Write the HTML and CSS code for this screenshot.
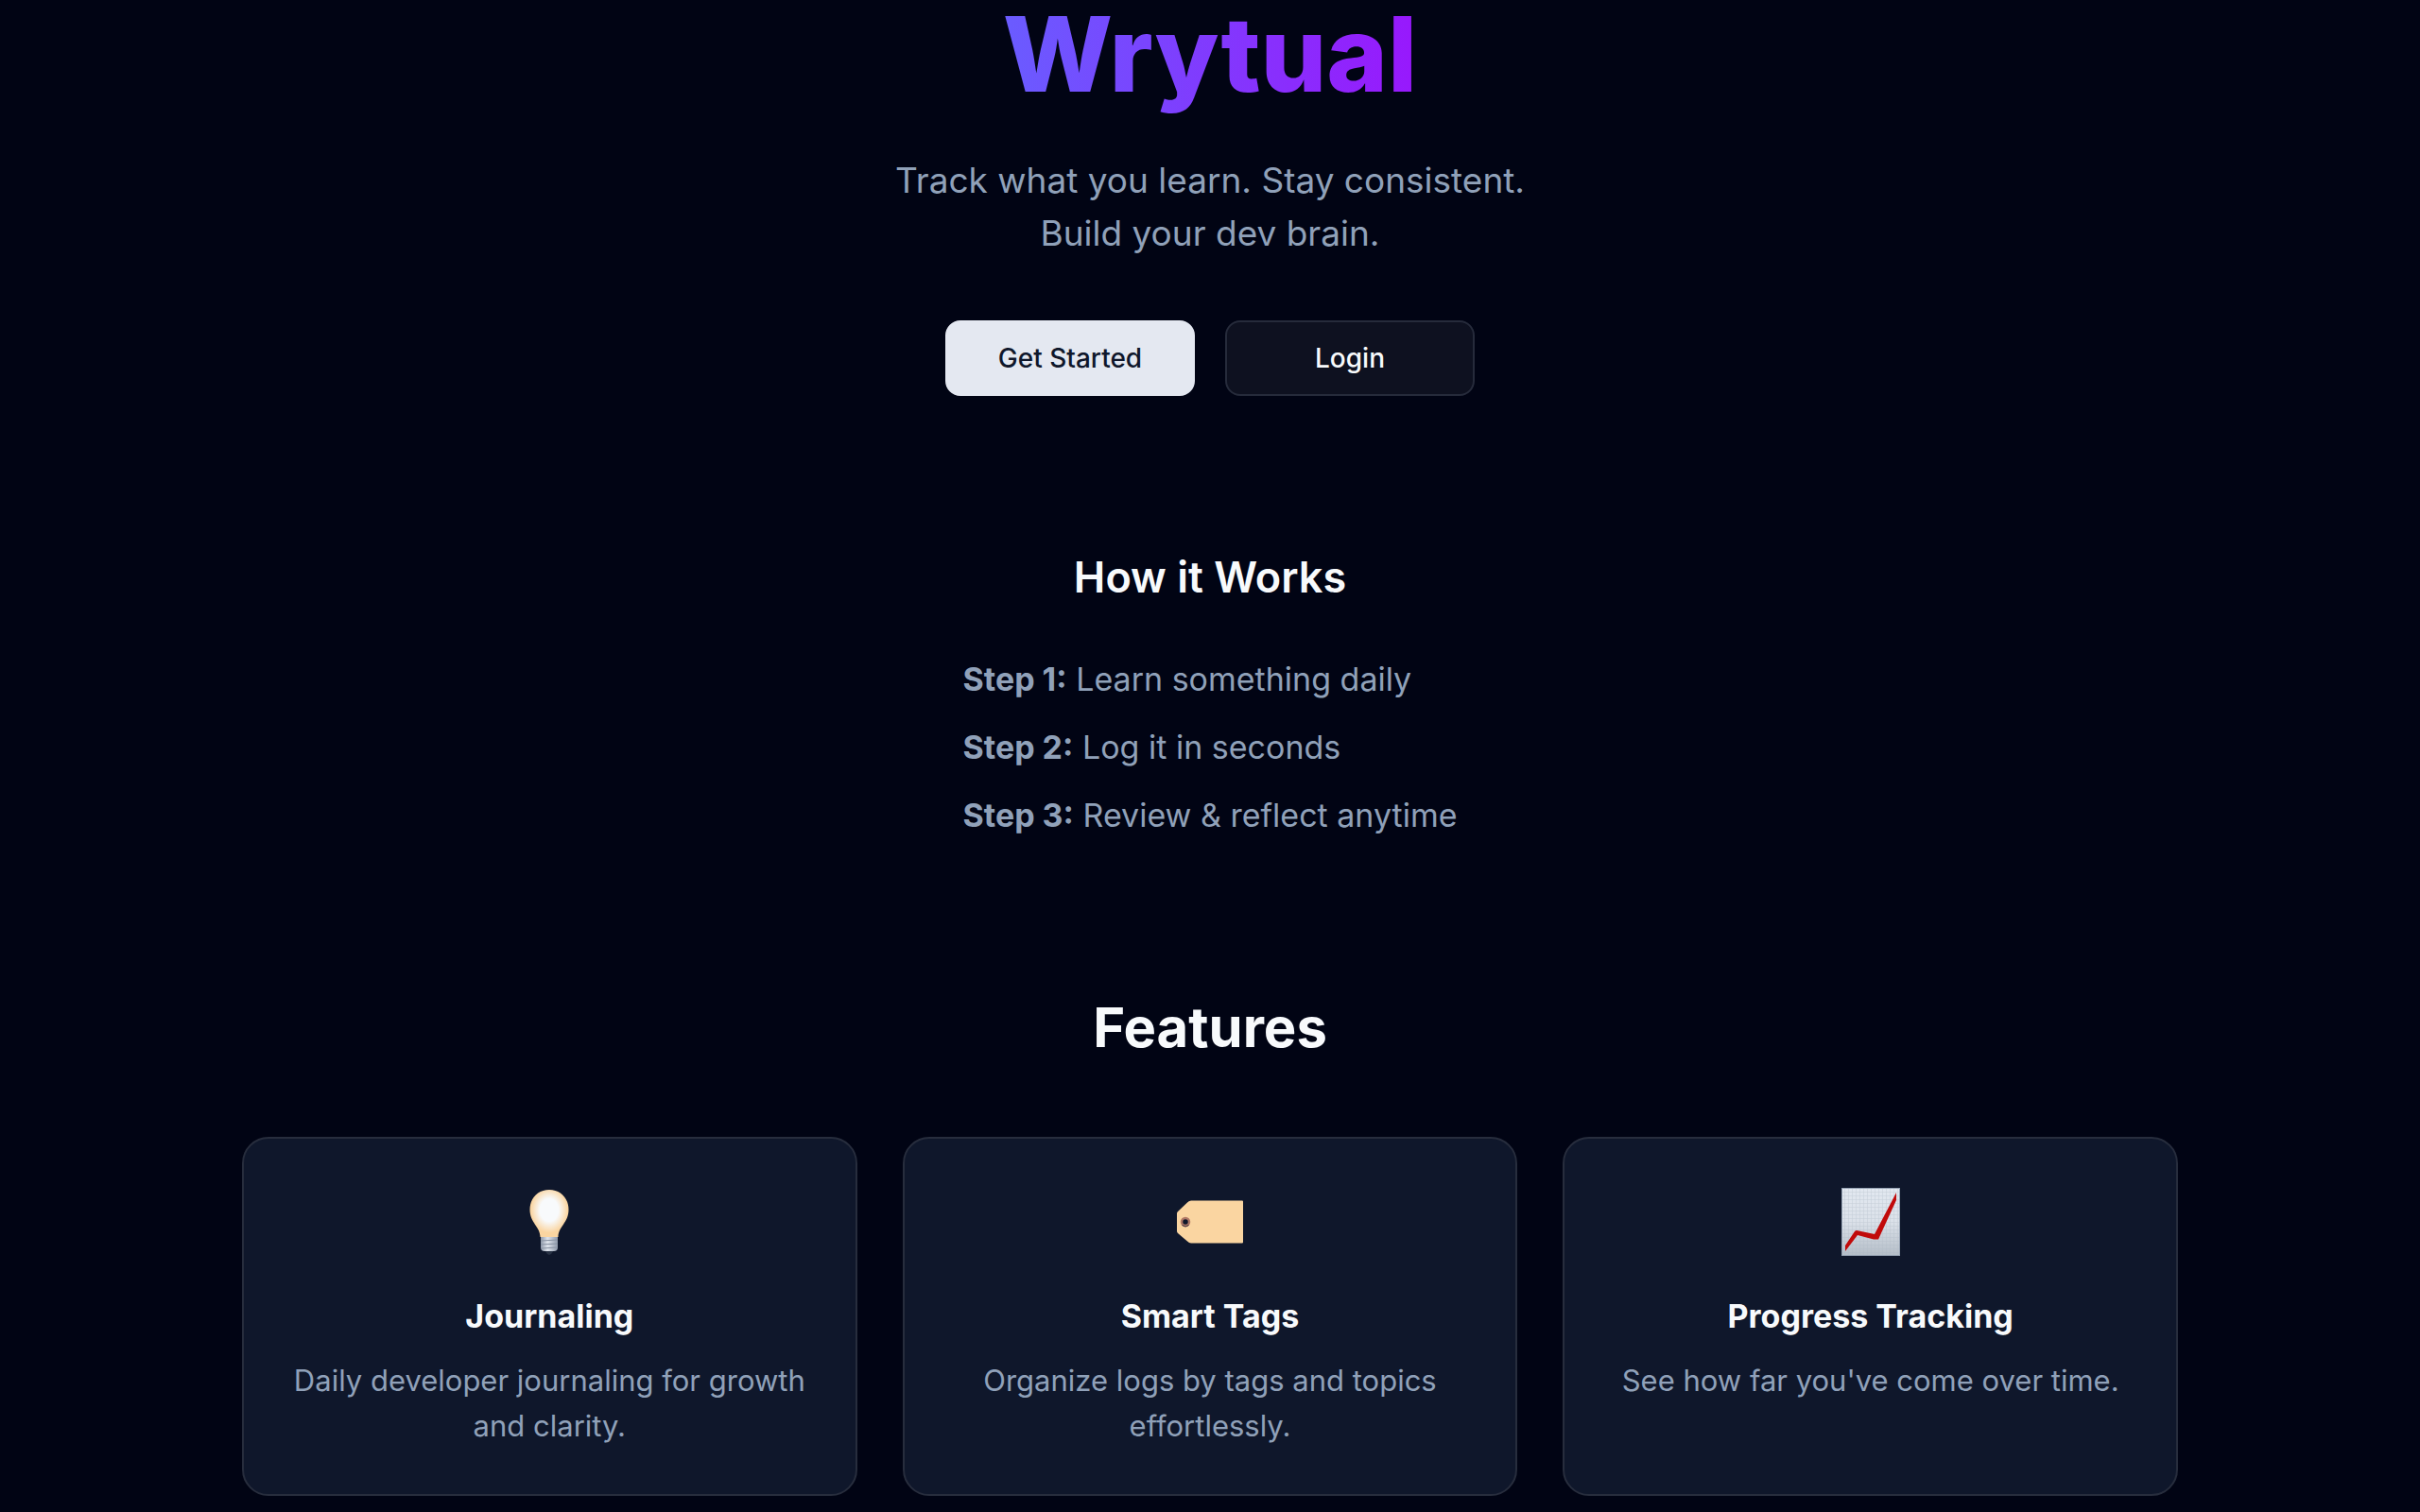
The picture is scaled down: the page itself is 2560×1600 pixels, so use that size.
FILE: index.html
```html
<!DOCTYPE html>
<html lang="en">
<head>
    <meta charset="UTF-8">
    <meta name="viewport" content="width=device-width, initial-scale=1.0">
    <title>Wrytual</title>
    <link rel="stylesheet" href="styles.css">
</head>
<body>

    <!-- Hero -->
    <header class="hero">
        <h1 class="logo">Wrytual</h1>
        <p class="tagline">Track what you learn. Stay consistent.<br>Build your dev brain.</p>
        <div class="button-group">
            <button type="button" class="btn btn-primary">Get Started</button>
            <button type="button" class="btn btn-outline">Login</button>
        </div>
    </header>

    <main>
        <!-- How it Works -->
        <section class="how">
            <h2 class="how-title">How it Works</h2>
            <ul class="steps">
                <li><strong>Step 1:</strong> Learn something daily</li>
                <li><strong>Step 2:</strong> Log it in seconds</li>
                <li><strong>Step 3:</strong> Review &amp; reflect anytime</li>
            </ul>
        </section>

        <!-- Features -->
        <section class="features">
            <h2 class="features-title">Features</h2>
            <div class="cards">
                <article class="card">
                    <svg class="card-icon" viewBox="0 0 80 80" aria-hidden="true">
                        <defs>
                            <radialGradient id="glow" cx="0.5" cy="0.43" r="0.48">
                                <stop offset="0.5" stop-color="#f8fafc"/>
                                <stop offset="1" stop-color="#fad5a1"/>
                            </radialGradient>
                            <linearGradient id="metal" x1="0" x2="1" y1="0" y2="0">
                                <stop offset="0" stop-color="#8f99aa"/>
                                <stop offset="0.4" stop-color="#dfe4ec"/>
                                <stop offset="1" stop-color="#8f99aa"/>
                            </linearGradient>
                        </defs>
                        <path d="M35 70h10l-3 4-2 1-2-1z" fill="#293345"/>
                        <path d="M31 55h18v12q0 4-4 4H35q-4 0-4-4z" fill="url(#metal)"/>
                        <path d="M31 60l18-1M31 64l18-1M32 68l16-1" stroke="#8993a3" stroke-width="1"/>
                        <path d="M40 6C28 6 19.500 15 19.500 27c0 14 11 18 11 29h19c0-11 11-15 11-29C60.500 15 52 6 40 6z" fill="url(#glow)"/>
                    </svg>
                    <h3 class="card-title">Journaling</h3>
                    <p class="card-text">Daily developer journaling for growth and clarity.</p>
                </article>
                <article class="card">
                    <svg class="card-icon" viewBox="0 0 80 80" aria-hidden="true">
                        <path d="M20 17.500h54q1 0 1 1v43q0 1-1 1H20q-2 0-4-2L6 52q-1-1-1-2V31q0-1 1-2l10-9.500q2-2 4-2z" fill="#fad5a1"/>
                        <circle cx="14" cy="40" r="4" fill="#0f172b" stroke="#af7866" stroke-width="2.500"/>
                        <path d="M10.500 43.500q3.500 3 7 0" fill="none" stroke="#3a3141" stroke-width="1"/>
                    </svg>
                    <h3 class="card-title">Smart Tags</h3>
                    <p class="card-text">Organize logs by tags and topics effortlessly.</p>
                </article>
                <article class="card">
                    <svg class="card-icon" viewBox="0 0 80 80" aria-hidden="true">
                        <defs>
                            <linearGradient id="paper" x1="0" x2="0" y1="0" y2="1">
                                <stop offset="0" stop-color="#e2e8f0"/>
                                <stop offset="0.5" stop-color="#dbe1e9"/>
                                <stop offset="1" stop-color="#b5bec8"/>
                            </linearGradient>
                            <pattern id="grid" width="4" height="4" patternUnits="userSpaceOnUse">
                                <path d="M0 0h4M0 0v4" stroke="#aab6c2" stroke-width="1"/>
                            </pattern>
                        </defs>
                        <rect x="9.500" y="4.500" width="61" height="71" fill="url(#paper)" stroke="#97a3b4"/>
                        <rect x="10" y="5" width="60" height="70" fill="url(#grid)" opacity="0.5"/>
                        <path d="M13 65l10-15q1-1 2-1l19 4L67 9v8L48 58.500H43L26 54 13 71z" fill="#c10a0a"/>
                    </svg>
                    <h3 class="card-title">Progress Tracking</h3>
                    <p class="card-text">See how far you've come over time.</p>
                </article>
            </div>
        </section>
    </main>

</body>
</html>
```

FILE: styles.css
```css
* {
    box-sizing: border-box;
    margin: 0;
    padding: 0;
}

body {
    font-family: Inter, "Liberation Sans", sans-serif;
    background: #010414;
    color: #f8fafc;
}

.hero {
    display: flex;
    flex-direction: column;
    align-items: center;
    text-align: center;
}

.logo {
    font-size: 110px;
    line-height: 115px;
    font-weight: 800;
    padding-bottom: 24px;
    margin-bottom: 24px;
    background: linear-gradient(to right, #6a5cff, #9818fc);
    -webkit-background-clip: text;
    background-clip: text;
    color: transparent;
}

.tagline {
    font-size: 37px;
    line-height: 56px;
    color: #90a1b9;
}

.button-group {
    display: flex;
    gap: 32px;
    margin-top: 64px;
}

.btn {
    width: 264px;
    height: 80px;
    border: 2px solid transparent;
    border-radius: 16px;
    font-family: inherit;
    font-size: 28px;
    font-weight: 500;
    cursor: pointer;
}

.btn-primary {
    background: #e4e8f1;
    border-color: #e4e8f1;
    color: #0f172b;
}

.btn-outline {
    background: #0e1120;
    border-color: #262b3b;
    color: #f8fafc;
}

.how {
    display: flex;
    flex-direction: column;
    align-items: center;
    margin-top: 160px;
}

.how-title {
    font-size: 45px;
    line-height: 64px;
    font-weight: 600;
    margin-bottom: 48px;
}

.steps {
    display: flex;
    flex-direction: column;
    gap: 16px;
    list-style: none;
    font-size: 34px;
    line-height: 56px;
    color: #90a1b9;
}

.features {
    max-width: 2048px;
    margin: 160px auto 0;
}

.features-title {
    font-size: 58px;
    line-height: 72px;
    font-weight: 700;
    text-align: center;
    margin-bottom: 80px;
}

.cards {
    display: grid;
    grid-template-columns: repeat(3, 1fr);
    gap: 48px;
}

.card {
    display: flex;
    flex-direction: column;
    align-items: center;
    padding: 48px;
    border: 2px solid #272d3d;
    border-radius: 28px;
    background: #0f172b;
    text-align: center;
}

.card-icon {
    width: 80px;
    height: 80px;
    margin-bottom: 32px;
}

.card-title {
    font-size: 34px;
    line-height: 56px;
    font-weight: 700;
    margin-bottom: 16px;
}

.card-text {
    font-size: 31px;
    line-height: 48px;
    color: #90a1b9;
}
```
